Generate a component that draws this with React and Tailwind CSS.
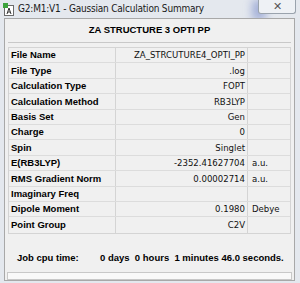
import React from 'react';

const rows = [
    { label: 'File Name', value: 'ZA_STRCUTURE4_OPTI_PP', unit: '' },
    { label: 'File Type', value: '.log', unit: '' },
    { label: 'Calculation Type', value: 'FOPT', unit: '' },
    { label: 'Calculation Method', value: 'RB3LYP', unit: '' },
    { label: 'Basis Set', value: 'Gen', unit: '' },
    { label: 'Charge', value: '0', unit: '' },
    { label: 'Spin', value: 'Singlet', unit: '' },
    { label: 'E(RB3LYP)', value: '-2352.41627704', unit: 'a.u.' },
    { label: 'RMS Gradient Norm', value: '0.00002714', unit: 'a.u.' },
    { label: 'Imaginary Freq', value: '', unit: '' },
    { label: 'Dipole Moment', value: '0.1980', unit: 'Debye' },
    { label: 'Point Group', value: 'C2V', unit: '' },
];

const narrow = { fontFamily: '"Liberation Sans Narrow", "Arial Narrow", "DejaVu Sans Condensed", sans-serif' };

function AppIcon() {
    return (
        <svg width="12" height="13" viewBox="0 0 12 13" className="shrink-0">
            <rect x="1.5" y="2.5" width="9" height="10" fill="#fff" stroke="#6b6b6b" />
            <rect x="0" y="0" width="5" height="5" fill="#3da33d" />
            <path d="M4 11 L6 5 L8 11 M5 9 H7" stroke="#333" strokeWidth="1" fill="none" />
        </svg>
    );
}

export default function App() {
    return (
        <div className="w-[300px] h-[283px] bg-[#e4e8ee] relative overflow-hidden" style={{ fontFamily: '"Liberation Sans", Arial, sans-serif' }}>
            {/* glass streak */}
            <div className="absolute left-[252px] top-0 w-[14px] h-[20px] bg-[#8a9ad0] blur-[4px] opacity-70" />

            {/* title bar */}
            <div className="h-[18px] flex items-center pl-[3px] relative">
                <AppIcon />
                <span className="ml-[3px] text-[10px] tracking-[-0.2px] text-[#1a1a1a] leading-none" style={narrow}>
                    G2:M1:V1 - Gaussian Calculation Summary
                </span>
                <div className="absolute right-[4px] top-0 w-[38px] h-[14px] border border-t-0 border-[#9aa3ad] rounded-b-[3px] bg-[#eef1f5] flex items-center justify-center">
                    <span className="text-[11px] text-[#555] leading-none">✕</span>
                </div>
            </div>

            {/* panel */}
            <div className="absolute left-[4px] top-[18px] w-[291px] h-[263px] border border-[#a8a8a8] bg-[#f0f0f0] flex flex-col">
                <div className="shrink-0 mx-[3px] h-[24px] border-b border-[#c8c8c8] flex items-center justify-center">
                    <span className="text-[9.5px] font-bold text-black">ZA STRUCTURE 3 OPTI PP</span>
                </div>

                <div className="shrink-0 mx-[3px] mt-[4px] border border-[#d4d4d4]">
                    {rows.map((r) => (
                        <div key={r.label} className="h-[15.4px] flex border-b border-[#dcdcdc] last:border-b-0 leading-none">
                            <div className="w-[107px] border-r border-[#d4d4d4] flex items-center pl-[2px] text-[9.5px] font-bold text-black whitespace-nowrap">{r.label}</div>
                            <div className="w-[132px] border-r border-[#d4d4d4] flex items-center justify-end pr-[2px] text-[9.5px] text-[#111] whitespace-nowrap" style={narrow}>{r.value}</div>
                            <div className="flex-1 flex items-center pl-[4px] text-[9.5px] text-[#111]" style={narrow}>{r.unit}</div>
                        </div>
                    ))}
                </div>

                <div className="shrink-0 mt-[19px] flex text-[9.5px] font-bold text-black leading-none whitespace-nowrap">
                    <span className="ml-[12px] w-[83px]">Job cpu time:</span>
                    <span>0 days&nbsp; 0 hours&nbsp; 1 minutes 46.0 seconds.</span>
                </div>

                <div className="shrink-0 mx-[2px] mt-[10px] h-[8px] border border-[#c8c8c8] bg-[#f9f9f9]" />
            </div>
        </div>
    );
}
